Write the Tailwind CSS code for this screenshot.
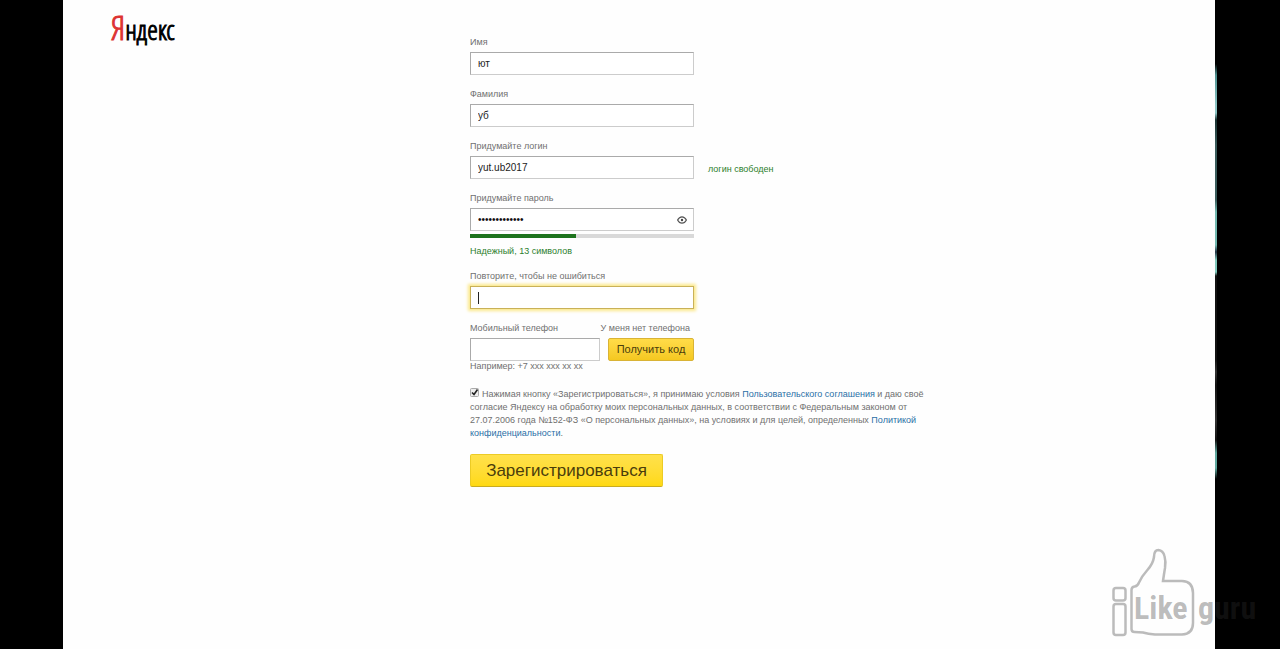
<!DOCTYPE html>
<html lang="ru">
<head>
  <meta charset="UTF-8">
  <meta name="viewport" content="width=device-width, initial-scale=1.0">
  <title>Регистрация</title>
  <script src="https://cdn.jsdelivr.net/npm/@tailwindcss/browser@4"></script>
</head>
<body class="relative flex min-h-screen bg-black font-['Liberation_Sans',Arial,sans-serif] text-[9px] leading-[13px] text-[#707070]">
  <main class="ml-[63px] flex flex-1 items-start bg-[#fefefe]">
    <!-- Logo -->
    <header class="w-[407px] shrink-0 pt-3.5 pl-12">
      <a href="#" class="font-['Open_Sans_Condensed_Light','Open_Sans_Condensed','Roboto_Condensed',sans-serif] text-[27px] leading-7 font-light text-black [-webkit-text-stroke:1px]"><span class="text-[33px] text-[#d33]">Я</span>ндекс</a>
    </header>

    <!-- Registration form -->
    <form class="w-[460px] pt-[34px] pb-8">
      <div class="mb-[11px] w-56">
        <label for="name" class="mb-0.5 block leading-4">Имя</label>
        <input id="name" type="text" value="ют" class="block h-[23px] w-full border border-[#ccc] border-t-[#aaa] border-l-[#aaa] bg-white px-[7px] text-[10px] text-[#222]">
      </div>
      <div class="mb-[11px] w-56">
        <label for="surname" class="mb-0.5 block leading-4">Фамилия</label>
        <input id="surname" type="text" value="уб" class="block h-[23px] w-full border border-[#ccc] border-t-[#aaa] border-l-[#aaa] bg-white px-[7px] text-[10px] text-[#222]">
      </div>
      <div class="mb-[11px]">
        <label for="login" class="mb-0.5 block leading-4">Придумайте логин</label>
        <div class="flex items-end gap-3.5">
          <input id="login" type="text" value="yut.ub2017" class="block h-[23px] w-56 border border-[#ccc] border-t-[#aaa] border-l-[#aaa] bg-white px-[7px] text-[10px] text-[#222]">
          <span class="pb-[3px] text-[#2d802d]">логин свободен</span>
        </div>
      </div>
      <div class="mb-2.5 w-56">
        <label for="password" class="mb-0.5 block leading-4">Придумайте пароль</label>
        <div class="flex h-[23px] items-center border border-[#ccc] border-t-[#aaa] border-l-[#aaa] bg-white pr-1.5">
          <input id="password" type="password" value="1234567890123" class="min-w-0 flex-1 pl-[7px] text-[10px] text-[#111] outline-none">
          <button type="button" aria-label="Показать пароль">
            <svg class="block h-2 w-2.5" viewBox="0 0 10 8" fill="none" stroke="#555" stroke-width="1.2">
              <path d="M.6 4C1.8 1.7 3.2.8 5 .8s3.2.9 4.4 3.2C8.2 6.3 6.8 7.2 5 7.2S1.8 6.3.6 4z"/>
              <circle cx="5" cy="4" r="1.2" fill="#444" stroke="none"/>
            </svg>
          </button>
        </div>
        <div class="mt-[3px] h-1 bg-[#d9d9d9]"><div class="h-full bg-[#1d731d]" style="width: 47.5%"></div></div>
        <p class="mt-[7px] text-[#2d802d]">Надежный, 13 символов</p>
      </div>
      <div class="mb-[11px] w-56">
        <label for="repeat" class="mb-0.5 block leading-4">Повторите, чтобы не ошибиться</label>
        <div class="flex h-[23px] items-center border border-[#c9b158] bg-white pl-[7px] shadow-[0_0_3px_2px_#fbe88a]">
          <span class="h-3 w-px bg-[#222]"></span>
          <input id="repeat" type="password" class="min-w-0 flex-1 text-[10px] outline-none">
        </div>
      </div>
      <div class="w-56">
        <div class="mb-0.5 flex justify-between leading-4">
          <label for="phone">Мобильный телефон</label>
          <a href="#" class="pr-1">У меня нет телефона</a>
        </div>
        <div class="flex gap-2">
          <input id="phone" type="tel" class="block h-[23px] w-[130px] border border-[#ccc] border-t-[#aaa] border-l-[#aaa] bg-white px-[7px] text-[10px] text-[#222]">
          <button type="button" class="h-[23px] flex-1 rounded-xs border border-[#d9b335] bg-linear-to-b from-[#ffdc48] to-[#f5c81f] text-[11px] text-[#4a3d0c]">Получить код</button>
        </div>
        <p class="mb-4 leading-[11px]">Например: +7 xxx xxx xx xx</p>
      </div>
      <p class="mb-3.5">
        <input id="agree" type="checkbox" checked class="peer sr-only">
        <label for="agree"><svg class="mr-[3px] inline-block size-[9px] align-baseline" viewBox="0 0 9 9" fill="none"><rect x=".5" y=".5" width="8" height="8" rx="1" fill="#eee" stroke="#aaa"/><path d="M2 4.5 4 6.5 7.5 1.5" stroke="#222" stroke-width="1.6"/></svg>Нажимая кнопку «Зарегистрироваться», я принимаю условия</label>
        <a href="#" class="text-[#2a6fa6]">Пользовательского соглашения</a> и даю своё согласие Яндексу на обработку моих персональных данных, в соответствии с Федеральным законом от 27.07.2006 года №152-ФЗ «О персональных данных», на условиях и для целей, определенных <a href="#" class="text-[#2a6fa6]">Политикой конфиденциальности</a>.
      </p>
      <button type="submit" class="h-[33px] w-[193px] rounded-xs border border-[#eccb25] border-b-[#c9ab20] bg-linear-to-b from-[#ffe14a] to-[#ffd910] text-[17px] text-[#4a3d0c]">Зарегистрироваться</button>
    </form>
  </main>

  <!-- Right margin with the coloured edge -->
  <div class="w-[65px]">
    <div class="h-[480px] w-0.5 bg-[linear-gradient(#000_64px,#4d8f8f_75px,#8cc4c4_105px,#8cc4c4_113px,#183030_120px,#3b5c5c_145px,#3b5c5c_200px,#72b8b0_212px,#72b8b0_245px,#234_252px,#80c8bc_260px,#80c8bc_272px,#111_276px,#111_360px,#333_372px,#111_385px,#333_420px,#111_440px,#5fa89f_453px,#5fa89f_468px,#000_479px)]"></div>
  </div>

  <!-- Watermark -->
  <svg class="absolute right-0 bottom-0 h-[109px] w-[180px]" viewBox="0 0 180 109" fill="none" stroke="#303030" stroke-opacity=".32" stroke-width="2.5">
    <rect x="13.5" y="48" width="12" height="12.5" rx="2.5"/>
    <rect x="13.5" y="64" width="12" height="31" rx="2.5"/>
    <path d="M31.5 50q0-3 3-3.5 3 0 4.5-4Q42 36 47 30.5 53 24 54 17q0-7 4.5-7 4.5.5 6 6 1.5 5 .5 12-1 6-2 13h19q11 .5 11 12v30q0 11-11 11.5H55Q48 94 43 92.5 39 92 34.5 92q-3 0-3-3z"/>
    <g class="font-['Roboto_Condensed','Noto_Sans_Condensed','Open_Sans_Condensed',sans-serif] text-[32px] font-bold" fill="#303030" fill-opacity=".32" stroke="none">
      <text x="34" y="79">Like</text>
      <text x="98" y="79">guru</text>
    </g>
  </svg>
</body>
</html>
